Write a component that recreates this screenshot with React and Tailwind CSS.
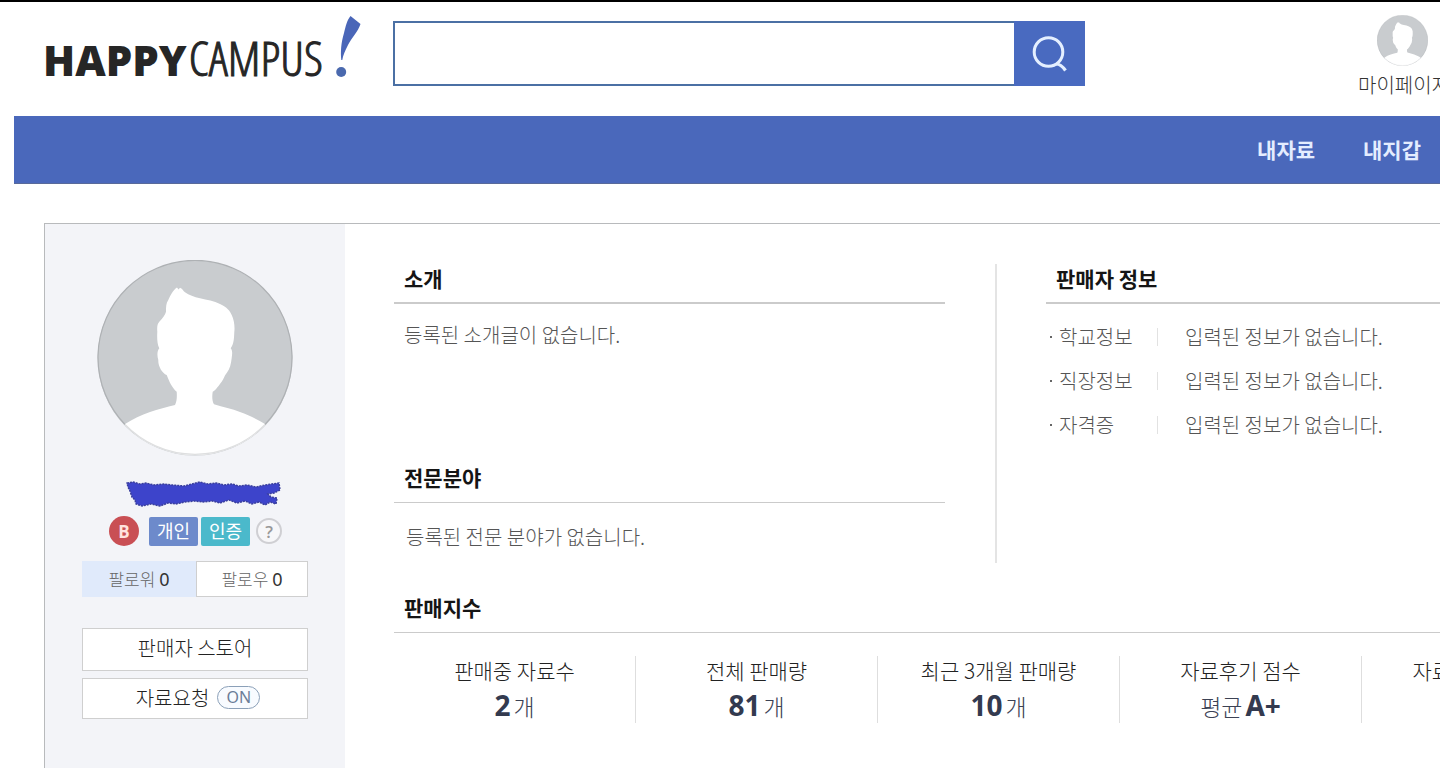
import React from "react";

const DIVIDER = "border-[#cbcbcb]";

function Avatar({ className }) {
  return (
    <svg viewBox="0 0 196 196" className={className} aria-hidden="true">
      <defs>
        <clipPath id="avatar-clip">
          <circle cx="98" cy="98" r="97" />
        </clipPath>
      </defs>
      <circle cx="98" cy="98" r="97.5" fill="#c9cccf" />
      <g clipPath="url(#avatar-clip)">
        <path
          fill="#fff"
          d="M83 27.7 C86 29 86 31 88 32.3 C92 35 97 37 103 38.3 C110 40 117 41 123 44 C130 47 133 51 134.700 55 C137 60 138 66 137.300 72 C137 78 137 84 133.700 88.300 C136 91 135 95 134.700 98 C134 104 133 109 129.700 113 C127 116 127 119 124.700 121.700 C122 125 119 130 115.700 131.700 C115 136 115 141 117 144.300 C126 147 135 149 143 152 C152 155 161 160 168 164 L190 196 L6 196 L28 164 C36 159 44 155 53 152 C61 149 70 147 78 145 C80 141 80 136 79.700 131.700 C75 128 72 121 69.700 115 C65 113 61 106 61.300 100 C60 96 60 91 62.300 88.300 C60 84 60 77 60.300 71.700 C60 68 60 64 62.300 61.700 C66 58 68 55 69 51.700 C69 47 69 43 71.300 40 C73 36 76 30 80 27.500 L81.500 29.500 Z"
        />
      </g>
      <path d="M28 164.500 A97 97 0 1 1 168 164.500" fill="none" stroke="#aeb1b4" strokeWidth="1.200" />
      <path d="M28 164.500 A97 97 0 0 0 168 164.500" fill="none" stroke="#dedfe0" strokeWidth="1.200" />
    </svg>
  );
}

function Logo() {
  return (
    <a href="#home" aria-label="HAPPYCAMPUS" className="flex h-[66px] w-[318px] shrink-0 items-baseline text-[#262626]">
      <span className="pt-[12px] font-['Open_Sans'] text-[42px] leading-[66px] font-extrabold">HAPPY</span>
      <span className="ml-[2px] font-['Open_Sans_Condensed_Light','Open_Sans_Condensed',sans-serif] text-[48px] leading-[66px] font-light [-webkit-text-stroke:1px_#262626]">
        CAMPUS
      </span>
      <svg viewBox="0 0 28 64" className="ml-auto h-[64px] w-[28px] shrink-0 self-start" aria-hidden="true">
        <path d="M17.500 1 L27.500 9 C25 17 19 22 15 30 C12 36 10 40 9.300 45 L8.300 45 C7.500 37 8 28 11 18 C12.500 12 14 5 17.500 1 Z" fill="#4a66b8" />
        <circle cx="8.200" cy="57" r="5" fill="#4a69ae" />
      </svg>
    </a>
  );
}

function SectionTitle({ children, thick }) {
  return (
    <h2
      className={`${DIVIDER} ${thick ? "border-b-2" : "border-b"} h-[40px] pl-[10px] text-[21px] leading-[28px] font-bold text-[#151515]`}
    >
      {children}
    </h2>
  );
}

const sellerInfo = [
  ["학교정보", "입력된 정보가 없습니다."],
  ["직장정보", "입력된 정보가 없습니다."],
  ["자격증", "입력된 정보가 없습니다."],
];

const stats = [
  { label: "판매중 자료수", value: "2", after: "개" },
  { label: "전체 판매량", value: "81", after: "개" },
  { label: "최근 3개월 판매량", value: "10", after: "개" },
  { label: "자료후기 점수", value: "A+", before: "평균" },
  { label: "자료요청 응답률", value: "0", after: "%" },
];

function Header() {
  return (
    <header className="flex h-[114px] items-start pt-[13px] pl-[43px]">
      <Logo />
      <form className="mt-[6px] ml-[32px] flex h-[65px] w-[692px] shrink-0" role="search">
        <input
          type="search"
          aria-label="검색"
          className="min-w-0 flex-1 border-2 border-r-0 border-[#4b70a4] bg-white px-4 text-xl outline-none"
        />
        <button type="button" aria-label="검색하기" className="flex w-[71px] items-center justify-center bg-[#496ac0]">
          <svg viewBox="0 0 40 40" className="h-[40px] w-[40px]" fill="none" stroke="#e4efff" strokeWidth="3" aria-hidden="true">
            <circle cx="18.500" cy="18" r="14.300" />
            <path d="M26 30 Q31 30 35.500 36.500" strokeWidth="3.200" />
          </svg>
        </button>
      </form>
      <a href="#mypage" className="-mr-[10px] ml-auto flex shrink-0 flex-col items-center gap-[4px] text-[20px] leading-[30px] font-light whitespace-nowrap text-[#333]">
        <Avatar className="mr-[4px] h-[51px] w-[51px]" />
        <span>마이페이지</span>
      </a>
    </header>
  );
}

function Sidebar() {
  return (
    <aside className="flex w-[300px] shrink-0 flex-col items-center bg-[#f3f4f8] px-[37px] pt-[36px]">
      <Avatar className="h-[196px] w-[196px]" />
      <svg viewBox="0 0 158 28" className="mt-[24px] ml-[19px] h-[28px] w-[158px]" aria-hidden="true">
        <path
          fill="#3d44cb"
          stroke="#3a3f9d"
          strokeWidth="1.500"
          strokeDasharray="2 1"
          d="M1 3 L7 2 L14 4 L20 3 L28 5 L38 4 L46 5 L58 6 L66 4 L74 2 L82 4 L90 3 L98 5 L106 4 L113 6 L121 5 L130 7 L139 5 L146 4 L153 3 L154 10 L148 13 L142 14 L145 17 L151 18 L150 24 L144 22 L139 25 L133 22 L126 24 L119 21 L111 23 L103 20 L94 23 L86 21 L77 22 L68 21 L59 22 L50 24 L42 23 L34 26 L25 24 L16 26 L10 24 L9 20 L6 17 L4 11 L2 7 Z"
        />
      </svg>
      <div className="mt-[8px] flex h-[30px] w-full items-center pl-[27px] text-[18px] leading-[27px] text-white">
        <span className="mr-[10px] flex h-[30px] w-[30px] items-center justify-center rounded-full bg-[#c94f54] font-['Open_Sans'] text-[17px] font-bold text-[#ffe2dd]">
          B
        </span>
        <span className="mr-[3px] h-[29px] w-[49px] rounded-xs bg-[#6d8acb] text-center">개인</span>
        <span className="mr-[6px] h-[29px] w-[49px] rounded-xs bg-[#4bb9cb] text-center">인증</span>
        <button
          type="button"
          aria-label="도움말"
          className="flex h-[26px] w-[26px] items-center justify-center rounded-full border-2 border-[#cfcfd3] bg-[#f7f7f9] font-['Open_Sans'] text-[17px] font-semibold text-[#999]"
        >
          ?
        </button>
      </div>
      <div className="mt-[15px] flex h-[36px] w-full text-[17px] text-[#666]">
        <a href="#followers" className="flex w-[114px] items-center justify-center gap-1 bg-[#e0eafb] font-light">
          팔로워 <span className="font-['Noto_Sans'] text-[18px] font-normal text-[#333]">0</span>
        </a>
        <a href="#following" className="flex flex-1 items-center justify-center gap-1 border border-[#cfcfcf] bg-white font-light">
          팔로우 <span className="font-['Noto_Sans'] text-[18px] font-normal text-[#333]">0</span>
        </a>
      </div>
      <button type="button" className="mt-[31px] h-[43px] w-full border border-[#cfcfcf] bg-white pb-[3px] text-[20px] leading-[30px] font-light text-[#222]">
        판매자 스토어
      </button>
      <button
        type="button"
        className="mt-[7px] flex h-[41px] w-full items-center justify-center gap-2 border border-[#cfcfcf] bg-white pb-[2px] pl-[6px] text-[20px] leading-[30px] font-light text-[#222]"
      >
        자료요청
        <span className="h-[23px] w-[43px] rounded-full border border-[#8ba0b8] bg-[#f8fbff] font-['Noto_Sans'] text-[16px] leading-[21px] font-normal text-[#6b7e98]">
          ON
        </span>
      </button>
    </aside>
  );
}

export default function App() {
  return (
    <div className="flex min-h-screen flex-col overflow-hidden border-t-2 border-black bg-white font-['Noto_Sans_CJK_KR',sans-serif]">
      <Header />
      <nav className="ml-[14px] flex h-[68px] shrink-0 items-center justify-end gap-[48px] border-b border-[#596a99] bg-[#4a68bb] pr-[19px] text-[21px] font-bold text-[#e4edff]">
        <a href="#files">내자료</a>
        <a href="#wallet">내지갑</a>
      </nav>
      <main className="mt-[39px] ml-[44px] flex flex-1 border-t border-l border-[#b8babc]">
        <Sidebar />
        <div className="min-w-0 flex-1 overflow-hidden pt-[40px] pl-[49px] text-[20px] leading-[30px] font-light text-[#555]">
          <div className="flex h-[299px]">
            <div className="flex min-w-0 flex-[551] flex-col">
              <section className="h-[199px]">
                <SectionTitle thick>소개</SectionTitle>
                <p className="mt-[16px] pl-[10px]">등록된 소개글이 없습니다.</p>
              </section>
              <section>
                <SectionTitle>전문분야</SectionTitle>
                <p className="mt-[19px] pl-[12px]">등록된 전문 분야가 없습니다.</p>
              </section>
            </div>
            <div className="mr-[49px] ml-[50px] w-[2px] shrink-0 bg-[#e4e4e4]" />
            <section className="min-w-0 flex-[394]">
              <SectionTitle thick>판매자 정보</SectionTitle>
              <dl className="mt-[11px]">
                {sellerInfo.map(([name, value]) => (
                  <div key={name} className="flex h-[44px] items-center whitespace-nowrap">
                    <dt className="flex w-[111px] items-center gap-[7px] pl-[4px]">
                      <span className="h-[2px] w-[2px] bg-[#666]" />
                      {name}
                    </dt>
                    <dd className="flex items-center gap-[27px]">
                      <span className="h-[18px] w-px bg-[#e2e2e2]" />
                      {value}
                    </dd>
                  </div>
                ))}
              </dl>
            </section>
          </div>
          <section className="mt-[30px]">
            <SectionTitle>판매지수</SectionTitle>
            <ul className="mt-[23px] flex">
              {stats.map((s) => (
                <li
                  key={s.label}
                  className="flex h-[67px] w-[242px] shrink-0 flex-col items-center border-r border-[#dedede] text-[21px] leading-[28px] whitespace-nowrap text-[#222]"
                >
                  <span>{s.label}</span>
                  <span className="flex items-baseline gap-[3px] text-[23px] leading-[42px] text-[#3c4254]">
                    {s.before}
                    <strong className="font-['Noto_Sans'] text-[28px] font-bold text-[#333a4f]">{s.value}</strong>
                    {s.after}
                  </span>
                </li>
              ))}
            </ul>
          </section>
        </div>
      </main>
    </div>
  );
}
